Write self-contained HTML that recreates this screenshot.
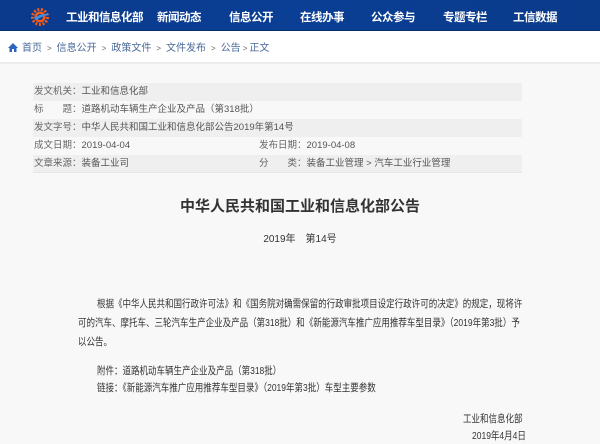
<!DOCTYPE html>
<html><head><meta charset="utf-8"><style>
*{margin:0;padding:0;box-sizing:border-box}
body{width:600px;height:444px;overflow:hidden;background:#fff;font-family:"Liberation Sans","Noto Sans CJK SC",sans-serif;position:relative}
.hd{position:absolute;left:0;top:0;width:600px;height:31px;background:linear-gradient(90deg,#0b3a8c,#0a3f95 50%,#0a3a8a);border-bottom:1px solid #08306f}
.nav{position:absolute;top:9px;color:#fff;font-weight:bold;font-size:11.5px;letter-spacing:-0.5px;white-space:nowrap}
.bc{position:absolute;top:39px;left:8px;font-size:10px;color:#4a6a9a;white-space:nowrap}
.bc span{color:#666;margin:0 5px;font-size:8px}
.main{position:absolute;left:0;top:62px;width:600px;height:382px;background:#f8f8f8;border-top:2px solid #ececec;overflow:hidden}
.row{position:absolute;left:33px;width:489px;height:18px;font-size:9.5px;color:#555;line-height:18px;padding-left:1px;white-space:nowrap}
.sh{background:#efefef}
.row b{font-weight:normal;color:#666}
.c2{position:absolute;left:226px;top:0}
.t{position:absolute;left:0;width:600px;text-align:center}
.p{position:absolute;left:78px;font-size:10.5px;color:#333;white-space:nowrap;transform:scaleX(0.81);transform-origin:0 0}
</style></head><body>
<div class="hd">
<svg style="position:absolute;left:31px;top:7px" width="20" height="19" viewBox="0 0 20 19">
<circle cx="9" cy="10" r="7.5" fill="none" stroke="#f25a1a" stroke-width="3" stroke-dasharray="2 1.6"/>
<circle cx="9" cy="10" r="5.5" fill="#f25a1a"/>
<circle cx="9" cy="10" r="3" fill="#0b3a8c"/>
<path d="M3 11 Q10 6 19 7 Q12 9 5 13Z" fill="#3a8fe0"/>
</svg>
<div class="nav" style="left:66px">工业和信息化部</div>
<div class="nav" style="left:157px">新闻动态</div>
<div class="nav" style="left:229px">信息公开</div>
<div class="nav" style="left:300px">在线办事</div>
<div class="nav" style="left:371px">公众参与</div>
<div class="nav" style="left:443px">专题专栏</div>
<div class="nav" style="left:513px">工信数据</div>
</div>
<div class="bc"><svg width="10" height="9" viewBox="0 0 10 9" style="vertical-align:-1px;margin-right:4px"><path d="M5 0L0 5h1.5v4h2.5V6h2v3h2.5V5H10Z" fill="#2a66c0"/></svg>首页<span>&gt;</span>信息公开<span>&gt;</span>政策文件<span>&gt;</span>文件发布<span>&gt;</span>公告<span style="margin:0 2px">&gt;</span>正文</div>
<div class="main">
<div class="row sh" style="top:19px"><b>发文机关：</b>工业和信息化部</div>
<div class="row" style="top:37px"><b>标　　题：</b>道路机动车辆生产企业及产品（第318批）</div>
<div class="row sh" style="top:55px"><b>发文字号：</b>中华人民共和国工业和信息化部公告2019年第14号</div>
<div class="row" style="top:73px"><b>成文日期：</b>2019-04-04<div class="c2"><b>发布日期：</b>2019-04-08</div></div>
<div class="row sh" style="top:91px;border-bottom:1px dotted #ddd"><b>文章来源：</b>装备工业司<div class="c2"><b>分　　类：</b>装备工业管理 &gt; 汽车工业行业管理</div></div>
<div class="t" style="top:131px;font-size:15px;font-weight:bold;color:#333">中华人民共和国工业和信息化部公告</div>
<div class="t" style="top:166px;font-size:10px;color:#333">2019年　第14号</div>
<div class="p" style="top:232px;left:97px">根据《中华人民共和国行政许可法》和《国务院对确需保留的行政审批项目设定行政许可的决定》的规定，现将许</div>
<div class="p" style="top:251px">可的汽车、摩托车、三轮汽车生产企业及产品（第318批）和《新能源汽车推广应用推荐车型目录》（2019年第3批）予</div>
<div class="p" style="top:270px">以公告。</div>
<div class="p" style="top:299px;left:97px">附件：道路机动车辆生产企业及产品（第318批）</div>
<div class="p" style="top:316px;left:97px">链接：《新能源汽车推广应用推荐车型目录》（2019年第3批）车型主要参数</div>
<div class="p" style="top:347px;left:463px">工业和信息化部</div>
<div class="p" style="top:364px;left:472px">2019年4月4日</div>
</div>
</body></html>
